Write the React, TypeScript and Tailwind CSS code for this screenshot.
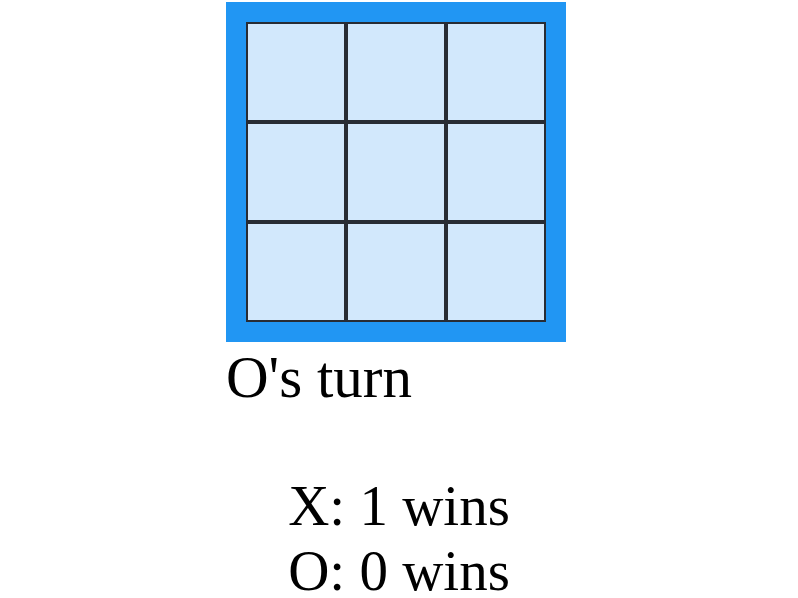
import { useState } from "react";

type Mark = "X" | "O" | null;

export default function App() {
  const [cells, setCells] = useState<Mark[]>(Array(9).fill(null));
  const [turn, setTurn] = useState<"X" | "O">("O");
  const [wins] = useState({ X: 1, O: 0 });

  const play = (i: number) => {
    if (cells[i]) return;
    const next = [...cells];
    next[i] = turn;
    setCells(next);
    setTurn(turn === "X" ? "O" : "X");
  };

  return (
    <div className="min-h-screen bg-white pt-[2px] text-black font-['Liberation_Serif','Times_New_Roman',serif] text-[57px] leading-[65px]">
      {/* board */}
      <div className="ml-[226px] w-[340px] bg-[#2196f3] p-5">
        <div className="grid grid-cols-3">
          {cells.map((c, i) => (
            <button
              key={i}
              onClick={() => play(i)}
              className="h-[100px] w-[100px] border-2 border-[#282c34] bg-[#d2e8fc] flex items-center justify-center"
            >
              {c}
            </button>
          ))}
        </div>
      </div>

      <div className="ml-[226px] mt-[3px] text-[59px]">{turn}'s turn</div>

      {/* scoreboard */}
      <div className="mt-[63px] text-center">
        <div>X: {wins.X} wins</div>
        <div>O: {wins.O} wins</div>
      </div>
    </div>
  );
}
